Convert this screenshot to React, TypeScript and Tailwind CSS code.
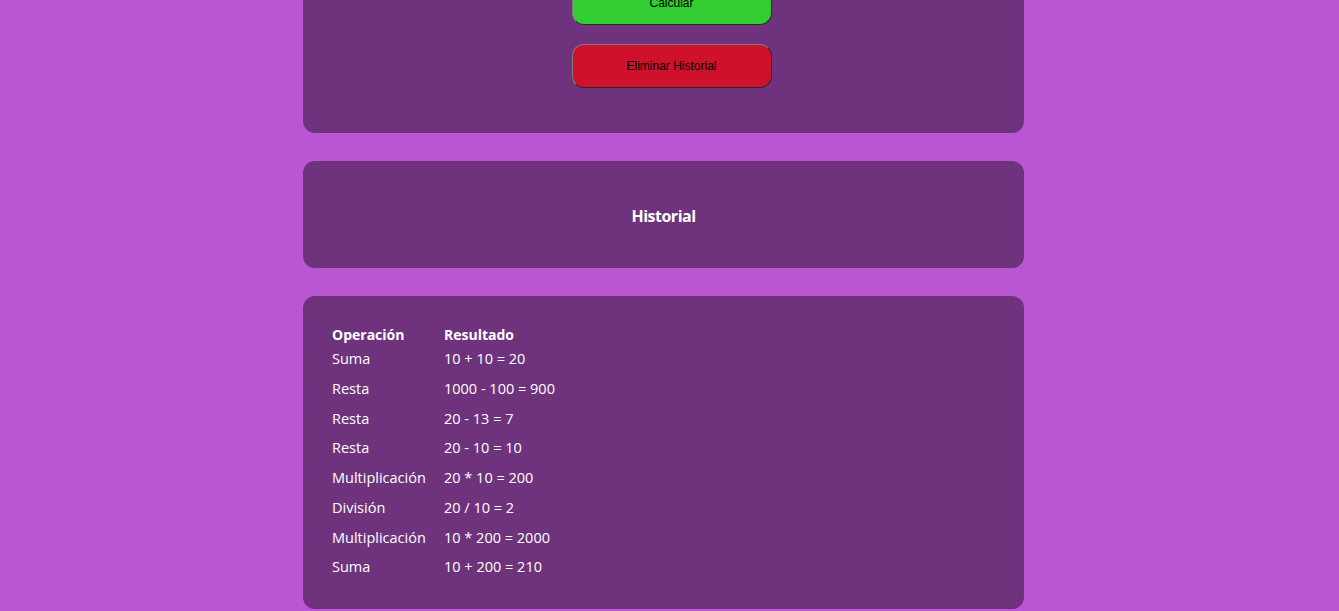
const rows: [string, string][] = [
  ["Suma", "10 + 10 = 20"],
  ["Resta", "1000 - 100 = 900"],
  ["Resta", "20 - 13 = 7"],
  ["Resta", "20 - 10 = 10"],
  ["Multiplicación", "20 * 10 = 200"],
  ["División", "20 / 10 = 2"],
  ["Multiplicación", "10 * 200 = 2000"],
  ["Suma", "10 + 200 = 210"],
];

const btn =
  "w-[200px] h-[44px] rounded-[12px] border-[1.5px] border-t-[#7c7c7c] border-l-[#7c7c7c] border-b-[#2b2b2b] border-r-[#2b2b2b] text-[12px] text-black font-['Liberation_Sans',Arial,sans-serif]";

export default function App() {
  return (
    <div className="min-h-[611px] bg-[#BA55D3] flex flex-col items-center pr-[12px] font-['Open_Sans',sans-serif] text-white">
      {/* Calculator card (scrolled) */}
      <div className="w-[721px] -mt-[40px] bg-[#6F337E] rounded-[12px] pt-[21px] pb-[45px] pl-[16px] flex flex-col items-center gap-[19px]">
        <button className={`${btn} bg-[#32CD32]`}>Calcular</button>
        <button className={`${btn} bg-[#CF112B]`}>Eliminar Historial</button>
      </div>

      {/* Title card */}
      <div className="w-[721px] mt-[28px] h-[107px] bg-[#6F337E] rounded-[12px] flex items-center justify-center">
        <h2 className="text-[16px] font-bold tracking-[-0.5px] pt-[2px]">Historial</h2>
      </div>

      {/* Table card */}
      <div className="w-[721px] mt-[28px] mb-[2px] bg-[#6F337E] rounded-[12px] pt-[28px] pb-[27px] pl-[29px]">
        <div className="grid grid-cols-[112px_1fr] h-[20px] items-center text-[14px] font-bold">
          <span>Operación</span>
          <span>Resultado</span>
        </div>
        {rows.map(([op, res], i) => (
          <div key={i} className="grid grid-cols-[112px_1fr] h-[29.75px] items-center text-[14.5px]">
            <span>{op}</span>
            <span>{res}</span>
          </div>
        ))}
      </div>
    </div>
  );
}
